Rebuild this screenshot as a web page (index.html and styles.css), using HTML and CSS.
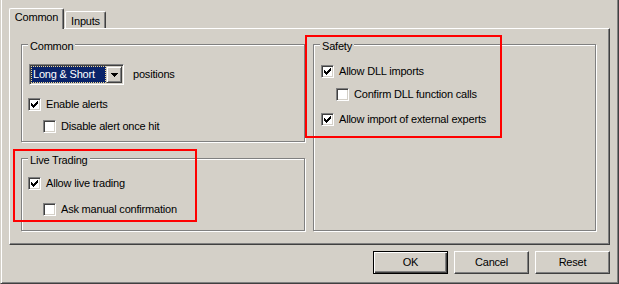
FILE: index.html
```html
<!DOCTYPE html>
<html>
<head>
    <meta charset="utf-8">
    <title>Expert properties</title>
    <link rel="stylesheet" href="styles.css">
</head>
<body>
<div class="window">
    <div class="tabs">
        <div class="tab active">Common</div>
        <div class="tab">Inputs</div>
    </div>
    <div class="panel">
        <div class="column">
            <div class="group common">
                <span class="group-title">Common</span>
                <div class="select-row">
                    <div class="combo">
                        <span class="combo-field"><span class="combo-value">Long &amp; Short</span></span>
                        <span class="combo-btn">
                            <svg width="7" height="4" viewBox="0 0 7 4"><path d="M0 0h7v1h-1v1h-1v1h-1v1h-1v-1h-1v-1h-1v-1H0z"/></svg>
                        </span>
                    </div>
                    <span class="combo-label">positions</span>
                </div>
                <div class="check gap-13">
                    <span class="box"><svg width="7" height="7" viewBox="0 0 7 7"><path d="M0 2h1v1h1v1h1V3h1V2h1V1h1V0h1v3h-1v1h-1v1h-1v1h-1v1h-1V6H1V5H0z"/></svg></span>
                    Enable alerts
                </div>
                <div class="check sub gap-9">
                    <span class="box"></span>
                    Disable alert once hit
                </div>
            </div>
            <div class="group live">
                <span class="group-title">Live Trading</span>
                <div class="check">
                    <span class="box"><svg width="7" height="7" viewBox="0 0 7 7"><path d="M0 2h1v1h1v1h1V3h1V2h1V1h1V0h1v3h-1v1h-1v1h-1v1h-1v1h-1V6H1V5H0z"/></svg></span>
                    Allow live trading
                </div>
                <div class="check sub gap-13">
                    <span class="box"></span>
                    Ask manual confirmation
                </div>
            </div>
        </div>
        <div class="group safety">
            <span class="group-title">Safety</span>
            <div class="check">
                <span class="box"><svg width="7" height="7" viewBox="0 0 7 7"><path d="M0 2h1v1h1v1h1V3h1V2h1V1h1V0h1v3h-1v1h-1v1h-1v1h-1v1h-1V6H1V5H0z"/></svg></span>
                Allow DLL imports
            </div>
            <div class="check sub gap-10">
                <span class="box"></span>
                Confirm DLL function calls
            </div>
            <div class="check gap-12">
                <span class="box"><svg width="7" height="7" viewBox="0 0 7 7"><path d="M0 2h1v1h1v1h1V3h1V2h1V1h1V0h1v3h-1v1h-1v1h-1v1h-1v1h-1V6H1V5H0z"/></svg></span>
                Allow import of external experts
            </div>
        </div>
    </div>
    <div class="buttons">
        <button class="btn default">OK</button>
        <button class="btn">Cancel</button>
        <button class="btn">Reset</button>
    </div>

    <!-- red highlight frames drawn over the dialog -->
    <div class="mark mark-live"></div>
    <div class="mark mark-safety"></div>
</div>
</body>
</html>
```

FILE: styles.css
```css
body {
    margin: 0;
    background-color: #d4d0c8;
    font-family: "Liberation Sans", Arial, sans-serif;
    font-size: 11px;
    line-height: 13px;
    letter-spacing: -0.2px;
    color: #000;
}

.window {
    position: relative;
    width: 619px;
    height: 284px;
    box-sizing: border-box;
    padding: 8px 8px 0 8px;
    border-left: 1px solid #d4d0c8;
    border-right: 1px solid #404040;
    border-bottom: 1px solid #404040;
    box-shadow: inset 1px 0 #fff, inset -1px -1px #808080;
}

.tabs {
    display: flex;
    align-items: flex-end;
    height: 20px;
    position: relative;
    z-index: 1;
}
.tab {
    width: 41px;
    height: 17px;
    box-sizing: border-box;
    margin-left: 1px;
    padding-top: 3px;
    text-align: center;
    background-color: #d4d0c8;
    border-left: 1px solid #fff;
    border-top: 1px solid #fff;
    border-right: 1px solid #404040;
    border-radius: 2px 2px 0 0;
    box-shadow: inset -1px 0 #808080;
}
.tab.active {
    width: 55px;
    height: 21px;
    margin-left: 0;
    margin-bottom: -1px;
    padding-top: 2px;
}

.panel {
    height: 217px;
    box-sizing: border-box;
    padding: 15px 13px 0 11px;
    border-top: 1px solid #fff;
    border-left: 1px solid #fff;
    border-right: 1px solid #404040;
    border-bottom: 1px solid #404040;
    box-shadow: inset -1px -1px #808080;
    display: grid;
    grid-template-columns: 284px 283px;
    column-gap: 8px;
    align-items: start;
}

.group {
    position: relative;
    box-sizing: border-box;
    padding: 0 6px;
    border: 1px solid #808080;
    box-shadow: inset 1px 1px #fff, 1px 1px #fff;
}
.group.common {
    height: 98px;
    padding-top: 19px;
}
.group.live {
    height: 73px;
    margin-top: 16px;
    padding-top: 18px;
}
.group.safety {
    height: 187px;
    padding-top: 20px;
    padding-left: 7px;
}
.group-title {
    position: absolute;
    top: -5px;
    left: 6px;
    padding: 0 2px;
    background-color: #d4d0c8;
}

.select-row {
    display: flex;
    align-items: center;
    padding-left: 1px;
}
.combo {
    width: 95px;
    height: 21px;
    box-sizing: border-box;
    display: flex;
    padding: 1px;
    background-color: #fff;
    border: 1px solid;
    border-color: #808080 #fff #fff #808080;
    box-shadow: inset 1px 1px #404040, inset -1px -1px #d4d0c8;
}
.combo-field {
    flex: 1;
    display: flex;
    align-items: center;
    padding-left: 1px;
    background-color: #0a246a;
    color: #fff;
    border: 1px dotted #f0d890;
}
.combo-btn {
    width: 16px;
    box-sizing: border-box;
    display: flex;
    align-items: center;
    justify-content: center;
    background-color: #d4d0c8;
    border: 1px solid;
    border-color: #d4d0c8 #404040 #404040 #d4d0c8;
    box-shadow: inset 1px 1px #fff, inset -1px -1px #808080;
}
.combo-btn svg {
    display: block;
}
.combo-label {
    margin-left: 9px;
}

.check {
    display: flex;
    align-items: center;
    gap: 5px;
    height: 13px;
    white-space: nowrap;
}
.check.sub {
    margin-left: 15px;
}
.box {
    width: 13px;
    height: 13px;
    box-sizing: border-box;
    flex: none;
    display: flex;
    align-items: center;
    justify-content: center;
    background-color: #fff;
    border: 1px solid;
    border-color: #808080 #fff #fff #808080;
    box-shadow: inset 1px 1px #404040, inset -1px -1px #d4d0c8;
}
.box svg {
    display: block;
}
.gap-9 { margin-top: 9px; }
.gap-10 { margin-top: 10px; }
.gap-12 { margin-top: 12px; }
.gap-13 { margin-top: 13px; }

.buttons {
    display: flex;
    justify-content: flex-end;
    gap: 6px;
    margin-top: 6px;
}
.btn {
    width: 75px;
    height: 23px;
    box-sizing: border-box;
    padding: 0;
    font: inherit;
    letter-spacing: inherit;
    color: #000;
    background-color: #d4d0c8;
    border: 1px solid;
    border-color: #fff #404040 #404040 #fff;
    box-shadow: inset -1px -1px #808080;
}
.btn.default {
    border-color: #000;
    box-shadow: inset 1px 1px #fff, inset -1px -1px #404040, inset -2px -2px #808080;
}

.mark {
    position: absolute;
    box-sizing: border-box;
    border: 2px solid #f00;
}
.mark-live {
    left: 12px;
    top: 149px;
    width: 184px;
    height: 73px;
}
.mark-safety {
    left: 304px;
    top: 35px;
    width: 197px;
    height: 103px;
}
```
